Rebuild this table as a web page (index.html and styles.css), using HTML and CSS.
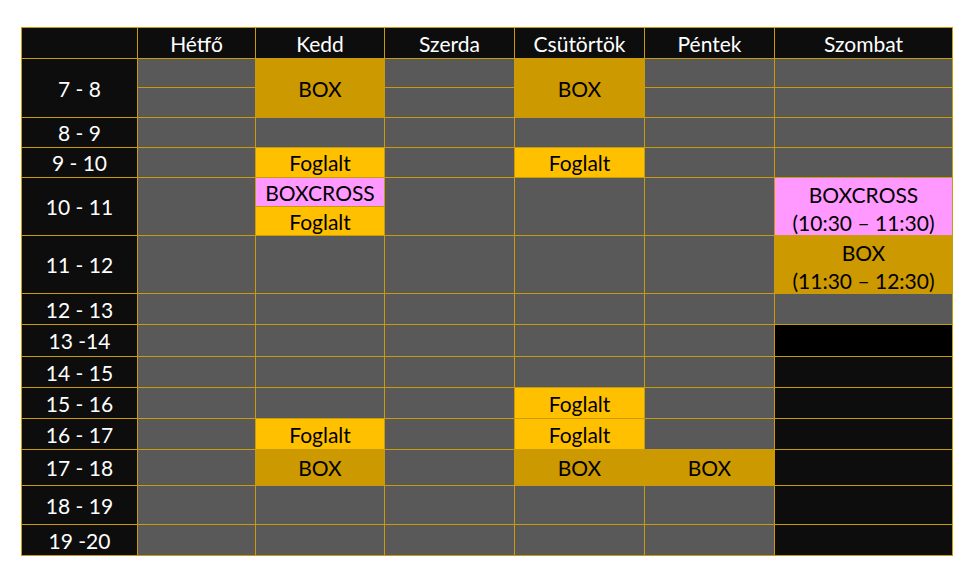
FILE: index.html
```html
<!DOCTYPE html>
<html lang="hu">
<head>
<meta charset="utf-8">
<title>Órarend</title>
<link rel="stylesheet" href="styles.css">
</head>
<body>
<div class="schedule">
  <div class="cell head"></div>
  <div class="cell head">Hétfő</div>
  <div class="cell head">Kedd</div>
  <div class="cell head">Szerda</div>
  <div class="cell head">Csütörtök</div>
  <div class="cell head">Péntek</div>
  <div class="cell head">Szombat</div>

  <div class="cell time span2">7 - 8</div>
  <div class="cell empty"></div>
  <div class="cell box span2">BOX</div>
  <div class="cell empty"></div>
  <div class="cell box span2">BOX</div>
  <div class="cell empty"></div>
  <div class="cell empty"></div>
  <div class="cell empty"></div>
  <div class="cell empty"></div>
  <div class="cell empty"></div>
  <div class="cell empty"></div>

  <div class="cell time">8 - 9</div>
  <div class="cell empty"></div>
  <div class="cell empty"></div>
  <div class="cell empty"></div>
  <div class="cell empty"></div>
  <div class="cell empty"></div>
  <div class="cell empty"></div>

  <div class="cell time">9 - 10</div>
  <div class="cell empty"></div>
  <div class="cell busy">Foglalt</div>
  <div class="cell empty"></div>
  <div class="cell busy">Foglalt</div>
  <div class="cell empty"></div>
  <div class="cell empty"></div>

  <div class="cell time span2">10 - 11</div>
  <div class="cell empty span2"></div>
  <div class="cell cross">BOXCROSS</div>
  <div class="cell empty span2"></div>
  <div class="cell empty span2"></div>
  <div class="cell empty span2"></div>
  <div class="cell cross span2 two">BOXCROSS<br>(10:30 – 11:30)</div>
  <div class="cell busy">Foglalt</div>

  <div class="cell time">11 - 12</div>
  <div class="cell empty"></div>
  <div class="cell empty"></div>
  <div class="cell empty"></div>
  <div class="cell empty"></div>
  <div class="cell empty"></div>
  <div class="cell box two">BOX<br>(11:30 – 12:30)</div>

  <div class="cell time">12 - 13</div>
  <div class="cell empty"></div>
  <div class="cell empty"></div>
  <div class="cell empty"></div>
  <div class="cell empty"></div>
  <div class="cell empty"></div>
  <div class="cell empty"></div>

  <div class="cell time">13 -14</div>
  <div class="cell empty"></div>
  <div class="cell empty"></div>
  <div class="cell empty"></div>
  <div class="cell empty"></div>
  <div class="cell empty"></div>
  <div class="cell closed-first"></div>

  <div class="cell time">14 - 15</div>
  <div class="cell empty"></div>
  <div class="cell empty"></div>
  <div class="cell empty"></div>
  <div class="cell empty"></div>
  <div class="cell empty"></div>
  <div class="cell closed"></div>

  <div class="cell time">15 - 16</div>
  <div class="cell empty"></div>
  <div class="cell empty"></div>
  <div class="cell empty"></div>
  <div class="cell busy">Foglalt</div>
  <div class="cell empty"></div>
  <div class="cell closed"></div>

  <div class="cell time">16 - 17</div>
  <div class="cell empty"></div>
  <div class="cell busy">Foglalt</div>
  <div class="cell empty"></div>
  <div class="cell busy">Foglalt</div>
  <div class="cell empty"></div>
  <div class="cell closed"></div>

  <div class="cell time">17 - 18</div>
  <div class="cell empty"></div>
  <div class="cell box">BOX</div>
  <div class="cell empty"></div>
  <div class="cell box">BOX</div>
  <div class="cell box">BOX</div>
  <div class="cell closed"></div>

  <div class="cell time">18 - 19</div>
  <div class="cell empty"></div>
  <div class="cell empty"></div>
  <div class="cell empty"></div>
  <div class="cell empty"></div>
  <div class="cell empty"></div>
  <div class="cell closed"></div>

  <div class="cell time">19 -20</div>
  <div class="cell empty"></div>
  <div class="cell empty"></div>
  <div class="cell empty"></div>
  <div class="cell empty"></div>
  <div class="cell empty"></div>
  <div class="cell closed"></div>
</div>
</body>
</html>
```
FILE: styles.css
```css
html, body {
  margin: 0;
  padding: 0;
  background: #ffffff;
}

body {
  padding: 27px 0 0 21px;
  font-family: "Lato", "Liberation Sans", sans-serif;
  font-size: 21px;
}

.schedule {
  display: inline-grid;
  grid-template-columns: 115px 117px 128px 129px 129px 129px 177px;
  grid-template-rows: 30px 28px 29px 29px 29px 28px 28px 57px 30px 31px 30px 30px 30px 35px 38px 30px;
  gap: 1px;
  padding: 1px;
  background: #c99a0c;
}

.cell {
  display: flex;
  align-items: center;
  justify-content: center;
  text-align: center;
  color: #000000;
  line-height: 1;
  white-space: nowrap;
}

.span2 {
  grid-row: span 2;
}

.head,
.time {
  background: #0d0d0d;
  color: #ffffff;
}

.empty {
  background: #595959;
}

.box {
  background: #cc9900;
}

.busy {
  background: #ffc000;
}

.cross {
  background: #ff99ff;
}

.two {
  line-height: 28px;
  padding-top: 4px;
}

.closed-first {
  background: #000000;
}

.closed {
  background: #0d0d0d;
}
```
